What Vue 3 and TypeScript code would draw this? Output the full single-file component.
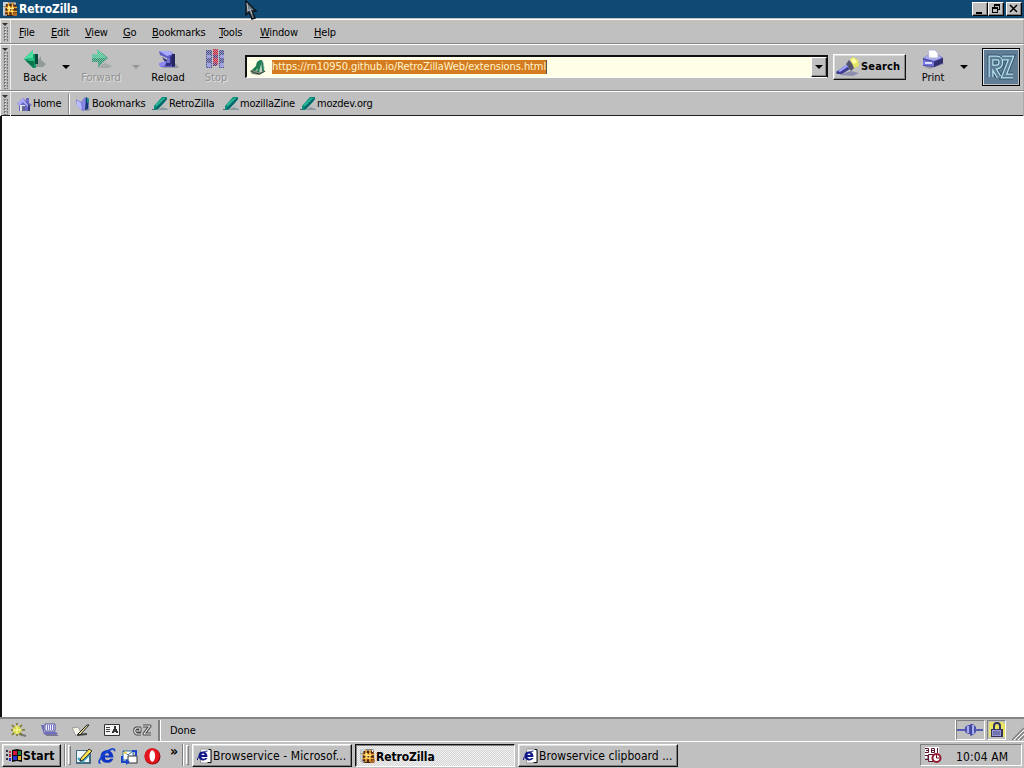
<script setup lang="ts">
interface Item { label: string; width: number }

const menus: Item[] = [
  { label: 'File', width: 32 }, { label: 'Edit', width: 34 }, { label: 'View', width: 38 },
  { label: 'Go', width: 29 }, { label: 'Bookmarks', width: 67 }, { label: 'Tools', width: 41 },
  { label: 'Window', width: 54 }, { label: 'Help', width: 40 },
]
const links: Item[] = [
  { label: 'RetroZilla', width: 71 }, { label: 'mozillaZine', width: 77 }, { label: 'mozdev.org', width: 90 },
]
</script>

<template>
  <div class="desktop">
    <svg class="defs" width="0" height="0" aria-hidden="true">
      <defs>
        <pattern id="grain" width="2" height="2" patternUnits="userSpaceOnUse"><path d="M0 0h1v1H0zM1 1h1v1H1z" fill="#c0c0c0" /></pattern>
        <symbol id="rz" viewBox="0 0 16 16">
          <path d="M1 1h13v13H1z" fill="#8d8b88" /><path d="M1 1h5v4H1zM1 6h2v7H1z" fill="#cbd0d3" />
          <path d="M4 3h10l1 10-4 2H3z" fill="#4b2815" />
          <path d="M12 12h3v3h-4z" fill="#b06a28" />
          <path d="M6.500 2v12M10.500 2v12M3 6.500h12M3 10.500h12" stroke="#f6a932" stroke-width="1.6" />
          <path d="M6 5h2v2h2V5h1v2h1v1h-2v2h1v1H9v-1H7v1H6V9h1V8H5V7h1z" fill="#ffe983" /><path d="M8 8h1.500v1.500H8z" fill="#6d3518" />
          <path d="M1 14h4M13 2v2" stroke="#eee" />
        </symbol>
        <symbol id="quill" viewBox="0 0 17 16">
          <path d="M5 14h11v-1l-3-1h-2l2-2" fill="#8b98a0" /><path d="M0 13h5v1H0z" fill="#567" />
          <path d="M2 10 10 1h5v2l-3 4-7 7H2z" fill="#078c79" /><path d="m3 9 8-7h2L5 10z" fill="#2eb69b" />
          <path d="m3 13 3-3 8-8 1 1-9 10z" fill="#06626a" />
        </symbol>
        <symbol id="ie" viewBox="0 0 16 16">
          <path d="M14 9H6c0 3 4 3 5 1h3c-2 6-12 5-12-2 0-8 12-8 12 1zM6 7h4c0-3-4-3-4 0z" fill="#1034c4" fill-rule="evenodd" />
          <path d="M2 14C-1 15 1 9 6 5c4-4 10-6 9-2" fill="none" stroke="#1746cf" stroke-width="1.6" />
        </symbol>
        <symbol id="iepage" viewBox="0 0 16 16">
          <path d="M5 1h8l2 2v12H4V2z" fill="#fff" stroke="#999" /><path d="M12 1.500h2.500v13H11" fill="none" stroke="#111" />
          <path d="M11 9H5c0 2 3 2 4 1h2c-2 4-9 3-9-2 0-6 9-6 9 1zM5 7h3c0-2-3-2-3 0z" fill="#101888" fill-rule="evenodd" />
          <path d="M1 12c-1-2 5-9 10-9" fill="none" stroke="#101888" />
        </symbol>
      </defs>
    </svg>

    <header class="title">
      <svg class="i16" viewBox="0 0 16 16"><use href="#rz" /></svg><b class="app-name">RetroZilla</b>
      <div class="controls">
        <i class="ctl"><svg width="14" height="12"><path d="M3 9h6v2H3z" /></svg></i>
        <i class="ctl"><svg width="14" height="12"><path d="M5 1h6v6H9v3H3V4h2zM6 3v1h3v2h1V3zM4 6v3h4V6z" fill-rule="evenodd" /></svg></i>
        <i class="ctl close"><svg width="14" height="12"><path d="m3 2 7 7M10 2 3 9" stroke="#000" stroke-width="1.5" /></svg></i>
      </div>
    </header>

    <nav class="row menu"><i class="grip" /><span v-for="m in menus" :key="m.label" class="mi" :style="{ width: m.width + 'px' }"><u>{{ m.label[0] }}</u>{{ m.label.slice(1) }}</span></nav>

    <section class="row tools">
      <i class="grip" />
      <div class="tool back">
        <svg width="24" height="23"><path d="M10 18h10l3-3-5-4v-4z" fill="#929b97" /><path d="M1 10 10 1v4h5v10h-2v4h-3z" fill="#159b66" /><path d="M1 10 10 1v9z" fill="#48dfa0" /><path d="m3 12 8-2v9z" fill="#08754f" /><path d="M12 5h3v10h-3z" fill="#064b3c" /><path d="M4 9h7v3H6z" fill="#27bd80" /></svg><span>Back</span>
      </div>
      <i class="arrow a1" />
      <div class="tool forward">
        <svg width="24" height="23"><path d="M8 19h12l3-2-7-3z" fill="#a4aaa6" /><path d="M3 5h5V0l11 9-10 9v-5H3z" fill="#209b70" /><path d="M3 5h5V0l10 9H3z" fill="#40cf94" /><path d="M3 5h5V0l11 9-10 9v-5H3z" fill="url(#grain)" opacity=".7" /></svg><span>Forward</span>
      </div>
      <i class="arrow a2 off" />
      <div class="tool reload">
        <svg width="24" height="23"><path d="M5 19h18l-3-4z" fill="#9999a4" /><path d="M3 2h11l5 4v12H5l-2-3h4l4-2V9L4 6z" fill="#5d5dc4" /><path d="M3 2h11l3 3-6 2z" fill="#a9a9ff" /><path d="m6 8 5 3 5-5 1 8-3 3H7l-2-3 4-1z" fill="#30307e" /><path d="m3 14 8-2-2 5-5 1z" fill="#8d89f1" /><path d="M11 9h3v5h-3z" fill="#7474d0" /><path d="M16 5h3v12l-3 1z" fill="#25255f" /></svg><span>Reload</span>
      </div>
      <div class="tool stop">
        <svg width="24" height="23"><path d="M2 1h6v18H2zM15 1h5v18h-5z" fill="#484e96" /><path d="M9 0h5v16H9z" fill="#d02040" /><path d="M3 6h4v3H3zM16 6h4v3h-4zM3 14h4v4H3zM16 14h4v4h-4z" fill="#9494f1" /><path d="M9 6h5v3H9zM9 14h4v3H9z" fill="#5e3278" /><path d="M2 0h20v20H2z" fill="url(#grain)" opacity=".7" /></svg><span>Stop</span>
      </div>
      <div class="address">
        <svg width="24" height="19"><path d="m2 13 5-3 11 3-7 4-7-1z" fill="#888b7d" /><path d="m5 11 2-2 2-5 3-2h3l2 9-4 3z" fill="#c5ddca" /><path d="m4 12 4-4 1-4 3-2h2l-3 12H9l1-4-3 3z" fill="#207b51" /><path d="m13 3 1 10h2l-1-9z" fill="#267a5c" /><path d="m3 13 4 2 5 1 5-3" stroke="#234c3c" fill="none" /></svg>
        <span class="url">https://rn10950.github.io/RetroZillaWeb/extensions.html</span>
        <button class="drop" aria-label="History"><i class="arrow" /></button>
      </div>
      <button class="search"><svg width="24" height="20"><path d="m3 18 14 1 6-3-8-2z" fill="#8d8daf" /><path d="m0 15 10-7 4 4-8 5H1z" fill="#3d3d91" /><path d="m2 14 9-7 2 2-9 6z" fill="#a3a3ff" /><path d="m10 7 3-4 6 7-4 4z" fill="#555570" /><path d="m14 2 3-2 5 3 1 6-5 2z" fill="#e5e565" /><path d="m15 3 3-2 3 4-3 2z" fill="#ffffab" /></svg><b>Search</b></button>
      <div class="tool print">
        <svg width="26" height="22"><path d="m4 18 6 2 14-5-3-3z" fill="#9a9aa7" /><path d="m3 9 5-3h11l4 3v5l-9 4-11-1z" fill="#4b4ba5" /><path d="m3 9 5-3h11l3 3-8 3z" fill="#a8a8ef" /><path d="M8 1h7l3 3v5H9z" fill="#fff" stroke="#b1b4d2" /><path d="m3 11 11 2v4L3 16z" fill="#7777df" /><path d="M5 13h7v2H5z" fill="#ddf" /><path d="m14 13 9-4v5l-9 4z" fill="#30306f" /></svg><span>Print</span>
      </div>
      <i class="arrow a3" />
      <div class="logo"><svg width="34" height="34"><path d="M0 0h34v34H0z" fill="#617d95" /><g fill="none"><path d="M7 27V8h6c5 0 5 8 0 9H9l6 10M18 8h9l-7 18h9" stroke="#35536f" stroke-width="7" /><path d="M7 27V8h6c5 0 5 8 0 9H9l6 10M18 8h9l-7 18h9" stroke="#b5e3ec" stroke-width="5" /><path d="M7 27V8h6c5 0 5 8 0 9H9l6 10M18 8h9l-7 18h9" stroke="#5d7b96" stroke-width="2.500" /></g></svg></div>
    </section>

    <nav class="row bookmarks">
      <i class="grip" />
      <a class="home"><svg width="17" height="16"><path d="m1 8 6-6 3 3V2h3v5l3 2-2 1v5H9v-4H6v4H3V9z" fill="#6969c8" /><path d="m1 8 6-6 7 8-2 1-5-5-4 4z" fill="#aaaaf8" /><path d="m7 2 7 8v5h-2V9z" fill="#38387c" /><path d="M4 9h5v6H4z" fill="#e4e4e8" /><path d="M6 10h3v5H6z" fill="#66668e" /></svg><span>Home</span></a>
      <i class="sep" />
      <a class="book"><svg width="17" height="16"><path d="m5 14 8 1 3-2-4-1z" fill="#8c8c9c" /><path d="m1 3 5 3 4-5 2 2 2 9-6 3-6-5z" fill="#7777d7" /><path d="m2 4 4 3 1 7-5-4z" fill="#bbbbff" /><path d="m7 6 3-4 2 9-4 4z" fill="#8888e2" /><path d="m11 1 3 2-1 10-3 1z" fill="#153776" /><path d="m12 2 2 1v3l-2 1z" fill="#159386" /></svg><span>Bookmarks</span></a>
      <a v-for="l in links" :key="l.label" :style="{ width: l.width + 'px' }"><svg width="17" height="16"><use href="#quill" /></svg><span>{{ l.label }}</span></a>
    </nav>

    <main class="page" />

    <footer class="status">
      <div class="components">
        <svg width="20" height="16"><path d="m10 12 7 2" stroke="#777" stroke-width="2" /><path d="M8 1v13M2 8h14M3 3l10 10M3 13 13 3" stroke="#777728" stroke-width="1.5" /><circle cx="8" cy="8" r="4" fill="#d9d94d" /><path d="M8 3v9M4 8h9" stroke="#ffffae" /></svg>
        <svg width="20" height="16"><path d="m4 12 3 2h12l-4-3z" fill="#777792" /><path d="M1 3h3v7h12l2 2H4z" fill="#6969bd" /><path d="M5 2h10v7H5z" fill="#f1f1ff" stroke="#5353a0" /><path d="M7.500 3v5M9.500 3v5M11.500 3v5M13.500 3v5M3 11h13" fill="none" stroke="#7777c8" /></svg>
        <svg width="20" height="16"><path d="m1 6 6-1 4 7-6 2z" fill="#f4f4e8" stroke="#999" /><path d="m6 13 10-1" stroke="#444" stroke-width="2" /><path d="m7 12 9-9h2L9 13z" fill="#eee49e" stroke="#222" /></svg>
        <svg width="20" height="16"><path d="M2.500 2.500h15v11h-15z" fill="#f4f4f4" stroke="#333" /><path d="M4 5.500h4M4 7.500h4M4 9.500h4" stroke="#444" /><path d="M12 4h2v3h1v2h1v2h-2v-1h-2v1h-2V9h1V7h1z" fill="#333" /></svg>
        <svg width="20" height="16"><g fill="none" stroke-linejoin="round"><path d="M8 12H4c-3-1-3-6 0-6h3v3H3M10 4h7l-6 8h7" stroke="#444" stroke-width="3" /><path d="M8 12H4c-3-1-3-6 0-6h3v3H3M10 4h7l-6 8h7" stroke="#e8e8e8" stroke-width="1.2" /></g></svg>
      </div>
      <div class="done">Done</div>
      <div class="cell plug"><svg width="26" height="16"><path d="M0 8h26" stroke="#555bb4" stroke-width="2" /><path d="m8 5 3-2h2l1-1h2l3 3v5l-3 3h-2l-1-1h-2l-3-2z" fill="#4d55b1" /><path d="M11 4v7M16 3v9" stroke="#c6ccff" stroke-width="1.5" /><path d="M14 2v12" stroke="#333a95" /></svg></div>
      <div class="cell lock"><svg width="17" height="18"><path d="M2 1h13l2 3v12H1V3z" fill="#e8e565" /><path d="M6 9V5q0-3 3-3t3 3v4" fill="none" stroke="#34345f" stroke-width="2" /><path d="M3 8h12v8H3z" fill="#34345f" /><path d="M4 9h9v6H4z" fill="#9797d7" /><path d="M5 11h7M5 13h7" stroke="#4d4d83" /></svg></div>
      <svg class="resize" width="12" height="16"><path d="m0 15 12-12M4 15l8-8M8 15l4-4" stroke="#808080" stroke-width="1.5" /><path d="m2 15 10-10M6 15l6-6" stroke="#fff" /></svg>
    </footer>

    <footer class="taskbar">
      <button class="start"><svg width="18" height="16"><path d="M0 2h2v2H0zm0 4h2v2H0zm0 4h2v2H0z" fill="#334" /><path d="M3 3h2v2H3zM3 6h2v3H3z" fill="#c42945" /><path d="M3 10h2v3H3z" fill="#2633ce" /><path d="m6 2 5-1 5 1v12l-5-1-5 1z" fill="#111" /><path d="M7 3h4v4H7z" fill="#d31935" /><path d="M12 3h3v4h-3z" fill="#178340" /><path d="M7 8h4v4H7z" fill="#2633ce" /><path d="M12 8h3v4h-3z" fill="#e0ad27" /></svg><b>Start</b></button>
      <i class="rail" /><i class="handle" />
      <div class="quick">
        <svg width="18" height="17"><path d="M1 2h15v14H1z" fill="#456b83" /><path d="M2 3h12v11H2z" fill="#edf7fa" /><path d="m3 10 4 4 7-7" fill="none" stroke="#3b9fbd" stroke-width="2" /><path d="m6 10 8-9 3 2-9 9-3 1z" fill="#ffe34a" stroke="#333" /></svg>
        <svg width="18" height="17"><use href="#ie" /></svg>
        <svg width="18" height="17"><path d="M2 3h10v9H2z" fill="#fff" stroke="#286da3" /><path d="m2 3 5 4 5-4" fill="none" stroke="#286da3" /><path d="M7 8h9v7H7z" fill="#fff" stroke="#333" /><path d="M1 8v6h6M15 8V3h-4" fill="none" stroke="#1d45ca" stroke-width="2" /><path d="m5 11 4 3-4 3z" fill="#1d45ca" /><path d="m2 5 3-2 1 3" fill="#ffcf31" /></svg>
        <svg width="18" height="17"><ellipse cx="8.5" cy="8.5" rx="8" ry="8" fill="#8c1015" /><ellipse cx="8" cy="8" rx="7.5" ry="7.8" fill="#e5151e" /><ellipse cx="8.3" cy="8" rx="2.8" ry="5.8" fill="#fff" /></svg>
      </div>
      <b class="more">»</b><i class="rail r2" /><i class="handle" />
      <button class="task t1"><svg width="17" height="16"><use href="#iepage" /></svg><span>Browservice - Microsof...</span></button>
      <button class="task active"><svg width="17" height="16"><use href="#rz" /></svg><b>RetroZilla</b></button>
      <button class="task t3"><svg width="17" height="16"><use href="#iepage" /></svg><span>Browservice clipboard ...</span></button>
      <div class="tray"><svg width="20" height="18"><path d="M1 1h14v11H1z" fill="#fff" /><path d="M1 2.500h3.500v4H1M2 4.500h2M7.500 2.500h3v4h-3zM7 4.500h3M13.500 2v5M1 9.500h3v4H1" fill="none" stroke="#5d1532" /><path d="M4.500 8.500h7v7h-7z" fill="#f1f1f1" stroke="#5d1532" /><circle cx="12.500" cy="12" r="4" fill="#fff" stroke="#941b32" stroke-width="2" /><path d="M12.500 9v3h3" fill="none" stroke="#681020" /></svg><span>10:04 AM</span></div>
    </footer>
    <svg class="cursor" width="13" height="20"><path d="m1 1 10 10H7l3 7-3 1-3-7-3 3z" fill="#6c7a86" stroke="#10151c" stroke-width="1.5" /><path d="m2 3 1 8 2-2 2 5" fill="none" stroke="#b8c1c8" /></svg>
  </div>
</template>

<style>
body { margin: 0; overflow: hidden; }
</style>
<style scoped>
* { box-sizing: border-box; }
.desktop { position: relative; width: 1024px; height: 768px; display: flex; flex-direction: column; overflow: hidden; background: #c0c0c0; color: #000; font: 11px/14px "DejaVu Sans Condensed", "DejaVu Sans", sans-serif; white-space: nowrap; letter-spacing: -.28px; }
.defs, .cursor { position: absolute; }
.cursor { left: 245px; top: 0; }
svg { display: block; flex: none; }
button { font: inherit; letter-spacing: inherit; color: inherit; margin: 0; padding: 0; border: 0; background: #c0c0c0; border-radius: 0; }
.title { height: 19px; padding: 1px 2px 0 2px; display: flex; align-items: flex-start; background: #104a74; color: #fff; border-bottom: 1px solid #c0c0c0; }
.i16 { width: 16px; height: 16px; }
.app-name { margin: 1px 0 0 1px; font-size: 12px; letter-spacing: -.12px; }
.controls { display: flex; margin: 1px 0 0 auto; }
.ctl { width: 16px; height: 14px; background: #c0c0c0; border: 1px solid; border-color: #fff #000 #000 #fff; box-shadow: inset -1px -1px #808080; }
.close { margin-left: 2px; }
.row { display: flex; flex: none; border-top: 1px solid #fff; border-bottom: 1px solid #858585; border-right: 1px solid #aaa; }
.grip { flex: none; position: relative; width: 11px; height: 100%; border-left: 1px solid #eee; border-right: 1px solid #eee; background: conic-gradient(#777 0 25%, #d4d4d4 0 50%, #b5b5b5 0) 2px 7px / 3px 3px; background-clip: content-box; padding: 7px 2px 1px; }
.grip::before { content: ''; position: absolute; left: 1px; top: 3px; border: 3px solid transparent; border-top-color: #333; border-bottom: 0; }
.menu { height: 25px; align-items: center; box-shadow: inset 0 3px #c5bfbc; }
.menu .grip { margin-right: 8px; }
.mi { flex: none; padding-top: 2px; letter-spacing: -.2px; }
.tools { height: 47px; align-items: flex-start; }
.tool { display: flex; flex-direction: column; align-items: center; padding-top: 4px; }
.tool span { margin-top: -1px; }
.back { width: 40px; margin-left: 4px; letter-spacing: -.1px; }
.forward { width: 52px; margin-left: 5px; letter-spacing: 0; }
.reload { width: 44px; margin-left: 6px; letter-spacing: -.05px; }
.stop { width: 34px; margin-left: 9px; letter-spacing: 0; }
.forward, .stop { color: #929292; text-shadow: 1px 1px #e0e0e0; }
.arrow { flex: none; width: 0; height: 0; border: 4px solid transparent; border-top-color: #000; border-bottom: 0; }
.a1, .a2, .a3 { margin-top: 20px; }
.a1 { margin-left: 7px; }
.a2 { margin-left: 5px; }
.off { border-top-color: #969696; }
.address { display: flex; align-items: center; width: 583px; height: 23px; margin: 10px 0 0 12px; padding-left: 1px; border: 2px solid #111; border-right-width: 1px; border-bottom: 1px solid #fff; background: #ffffe7; }
.url { width: 275px; height: 14px; line-height: 14px; color: #fff6cf; background: #d57c20; border-right: 1px solid #555; letter-spacing: -.08px; }
.drop { display: flex; align-items: center; justify-content: center; width: 16px; height: 20px; margin-left: auto; border: 1px solid; border-color: #fff #111 #111 #fff; box-shadow: inset -1px -1px #888; }
.search { display: flex; align-items: center; width: 73px; height: 26px; margin: 9px 0 0 5px; padding-left: 2px; border: 1px solid; border-color: #fff #111 #111 #fff; box-shadow: inset -1px -1px #888, inset 1px 1px #ddd; }
.search b { margin-left: 1px; letter-spacing: .15px; }
.print { width: 40px; margin-left: 7px; letter-spacing: 0; }
.print span { margin-top: 0; }
.a3 { margin-left: 7px; }
.logo { width: 38px; height: 38px; margin: 3px 0 0 14px; padding: 1px; border: 1px solid #000; box-shadow: inset 1px 1px #dce7ef; }
.bookmarks { height: 25px; align-items: center; border-bottom: 0; box-shadow: inset 0 -1px #222; }
.bookmarks a { display: flex; align-items: center; flex: none; letter-spacing: -.2px; }
.home { width: 52px; margin-left: 5px; }
.sep { width: 2px; height: 20px; border-left: 1px solid #888; border-right: 1px solid #fff; }
.book { width: 77px; margin-left: 5px; }
.page { flex: 1; min-height: 0; background: #fff; border-left: 2px solid #111; }
.status { display: flex; align-items: center; height: 24px; border-top: 2px solid #858585; }
.components { display: flex; align-items: center; gap: 11px; width: 160px; height: 21px; padding-left: 9px; border-right: 2px solid #808080; box-shadow: 1px 0 #fff; }
.done { width: 796px; height: 20px; padding: 4px 0 0 10px; border-right: 1px solid #fff; letter-spacing: -.1px; }
.cell { display: flex; align-items: center; height: 20px; border: 1px solid; border-color: #808080 #fff #fff #808080; }
.plug { width: 29px; }
.lock { width: 19px; margin-left: 2px; }
.resize { margin: 5px 0 0 auto; }
.taskbar { display: flex; align-items: flex-start; height: 27px; padding: 2px 2px 0 2px; border-top: 1px solid #fff; }
.start, .task { display: flex; align-items: center; flex: none; height: 23px; border: 1px solid; border-color: #fff #111 #111 #fff; box-shadow: inset -1px -1px #808080, inset 1px 1px #dfdfdf; }
.start { width: 59px; padding-left: 3px; font-size: 12px; letter-spacing: .15px; }
.start svg { margin-right: -1px; }
.rail { width: 2px; height: 22px; margin-left: 3px; border-left: 1px solid #808080; border-right: 1px solid #fff; }
.handle { width: 3px; height: 20px; margin: 1px 0 0 2px; border: 1px solid; border-color: #fff #808080 #808080 #fff; }
.quick { display: flex; gap: 5px; margin: 4px 0 0 4px; }
.more { width: 12px; margin-left: 8px; font-size: 14px; line-height: 14px; }
.r2 { margin-left: 0; }
.task { width: 160px; padding-left: 3px; font-size: 12px; }
.t1 { margin-left: 3px; letter-spacing: .1px; }
.active { margin: 0 3px; letter-spacing: -.12px; border-color: #111 #fff #fff #111; box-shadow: inset 1px 1px #808080; background: conic-gradient(#f2f2f2 25%, #d4d4d4 0 50%, #f2f2f2 0 75%, #d4d4d4 0) 0 0 / 2px 2px; }
.active b { margin-top: 2px; }
.t3 { letter-spacing: .03px; }
.tray { display: flex; align-items: center; width: 102px; height: 22px; margin-left: auto; padding-left: 3px; border: 1px solid; border-color: #808080 #fff #fff #808080; }
.tray span { margin: 3px 0 0 12px; font-size: 12px; letter-spacing: .12px; }
</style>
